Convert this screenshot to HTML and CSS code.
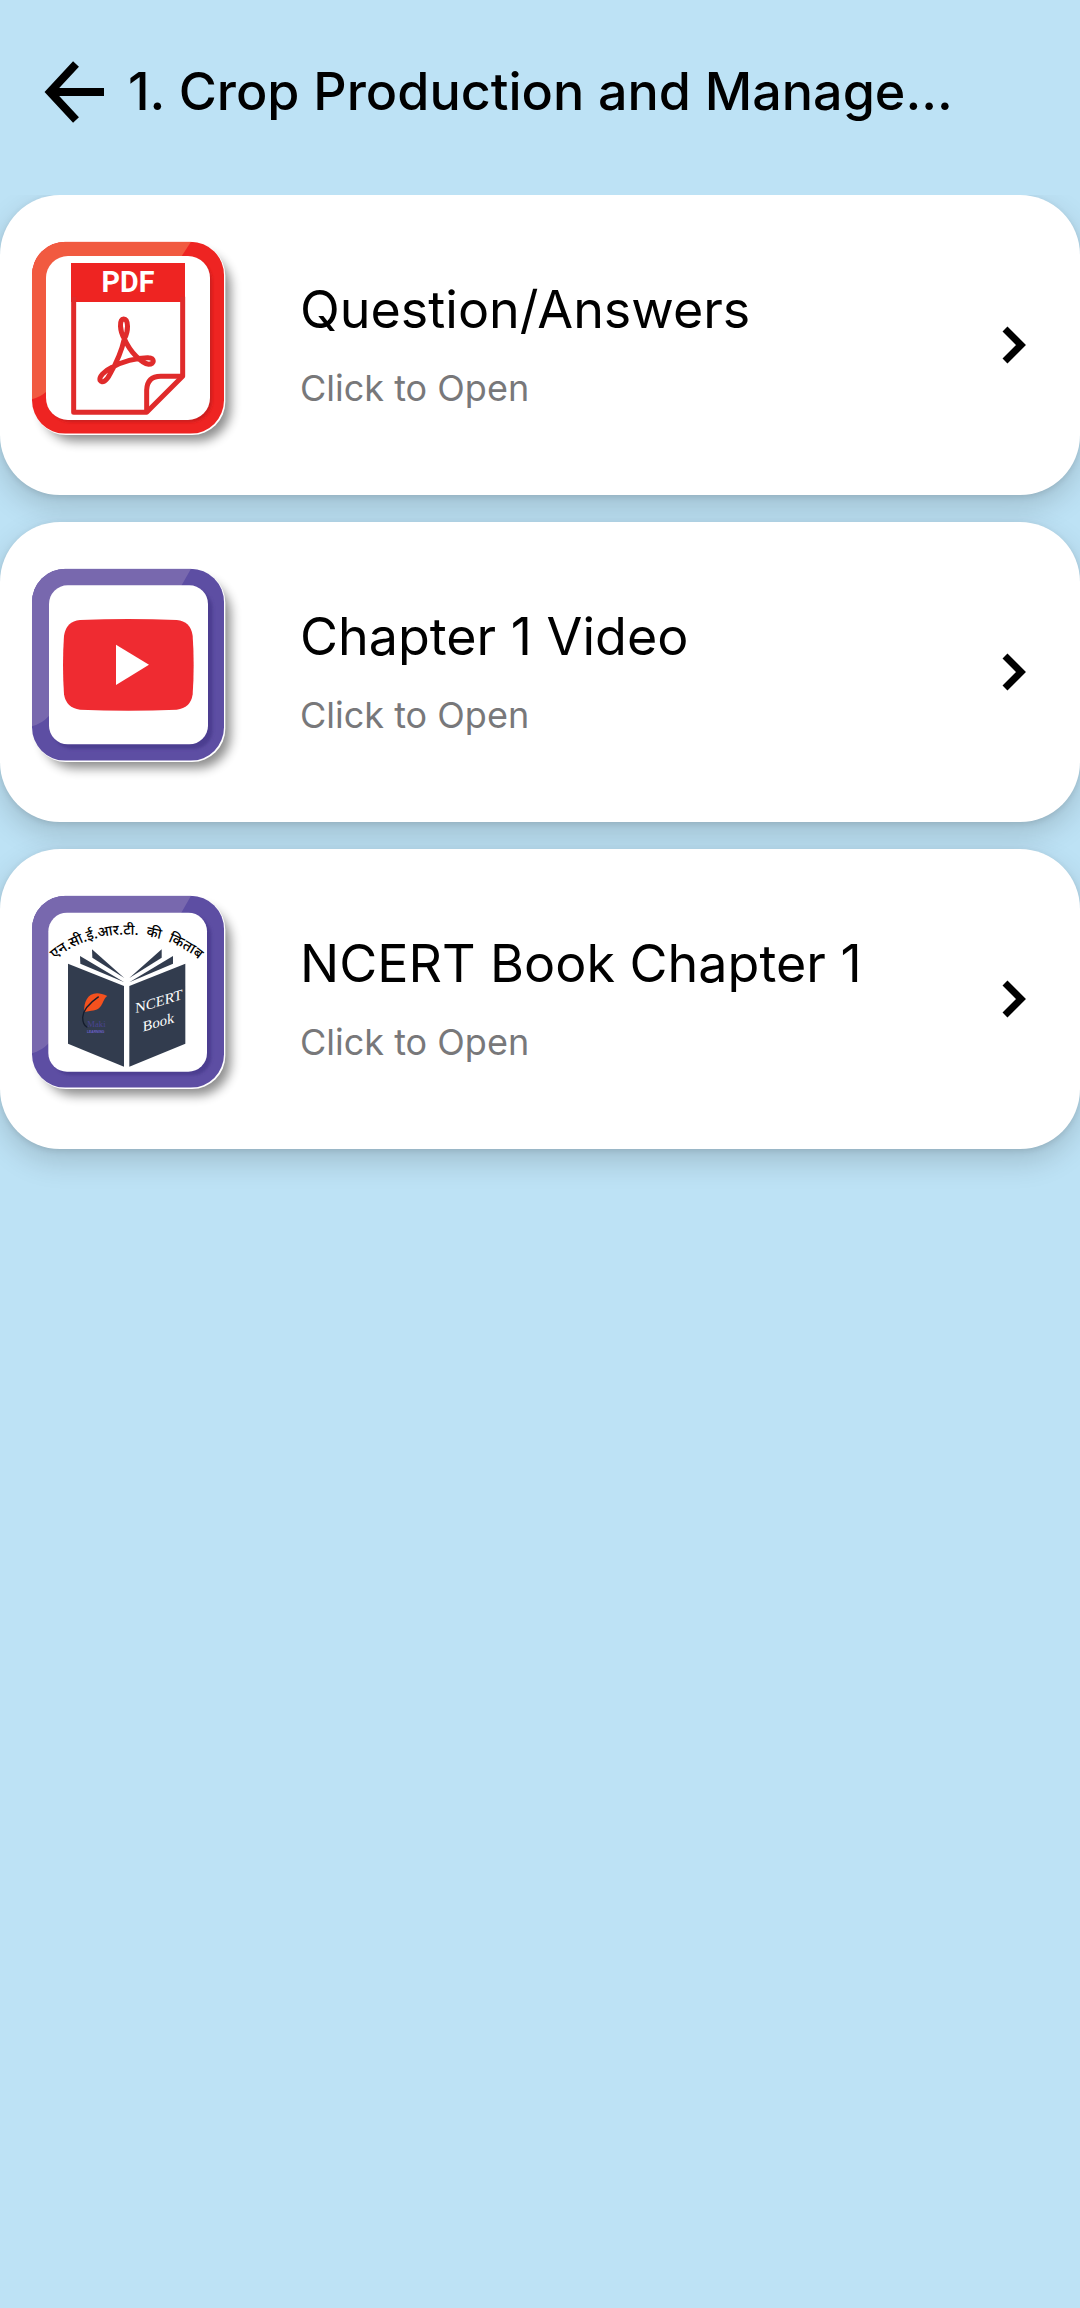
FILE: index.html
```html
<!DOCTYPE html>
<html lang="en">

<head>
    <meta charset="UTF-8">
    <meta name="viewport" content="width=device-width, initial-scale=1.0">
    <title>Crop Production and Management</title>
    <link rel="stylesheet" href="styles.css">
</head>

<body>
    <header class="topbar">
        <button class="back-btn" type="button" aria-label="Back">
            <svg class="back-icon" viewBox="0 0 60 62" aria-hidden="true">
                <path d="M60 31H8M32 3L6 31L32 59" />
            </svg>
        </button>
        <h1 class="topbar-title">1. Crop Production and Manage...</h1>
    </header>

    <main class="chapter-list">
        <!-- PDF -->
        <a class="card" href="#questions">
            <svg class="card-icon" viewBox="0 0 690 690" aria-hidden="true">
                <defs>
                    <filter id="blur" x="-20%" y="-20%" width="140%" height="140%">
                        <feGaussianBlur stdDeviation="16" />
                    </filter>
                    <filter id="softBlur" x="-20%" y="-20%" width="140%" height="140%">
                        <feGaussianBlur stdDeviation="4" />
                    </filter>
                    <clipPath id="tileClip">
                        <rect x="36" y="35" width="576" height="576" rx="100" />
                    </clipPath>
                </defs>
                <rect class="tile-shadow" x="66" y="70" width="566" height="564" rx="100" filter="url(#blur)" />
                <rect class="tile-edge" x="38" y="37" width="578" height="578" rx="100" />
                <g clip-path="url(#tileClip)">
                    <rect class="tile-red" x="36" y="35" width="576" height="576" />
                    <path class="tile-red-light" d="M36 35H513L484 80L78 486Q60 502 36 508Z" />
                </g>
                <rect class="tile-inner-red" x="88" y="88" width="488" height="488" rx="66" filter="url(#softBlur)" />
                <rect class="tile-face" x="78" y="78" width="492" height="492" rx="66" />
                <path class="pdf-head" d="M153 99H495V216H153Z" />
                <path class="pdf-line" d="M161 200V547H380L488 439V200" />
                <path class="pdf-line" d="M380 547V480Q382 439 422 439H488" />
                <path class="pdf-mark" d="M313 326C299 304 297 268 311 267C326 268 326 304 313 326C330 365 364 400 386 403C405 403 404 383 386 383C350 382 304 396 276 412C250 424 237 442 240 451C246 461 260 453 270 432C286 404 306 358 313 326Z" />
                <text class="pdf-text" x="324" y="185">PDF</text>
            </svg>
            <div class="card-text">
                <h2 class="card-title">Question/Answers</h2>
                <p class="card-sub">Click to Open</p>
            </div>
            <svg class="chevron" viewBox="0 0 24 38" aria-hidden="true">
                <path d="M3 3L19 19L3 35" />
            </svg>
        </a>

        <!-- Video -->
        <a class="card" href="#video">
            <svg class="card-icon" viewBox="0 0 690 690" aria-hidden="true">
                <rect class="tile-shadow" x="66" y="70" width="566" height="564" rx="100" filter="url(#blur)" />
                <rect class="tile-edge" x="38" y="37" width="578" height="578" rx="100" />
                <g clip-path="url(#tileClip)">
                    <rect class="tile-purple" x="36" y="35" width="576" height="576" />
                    <path class="tile-purple-light" d="M36 35H513L484 86L86 478Q66 500 36 508Z" />
                </g>
                <rect class="tile-inner-purple" x="100" y="98" width="478" height="478" rx="56" filter="url(#softBlur)" />
                <rect class="tile-face" x="87" y="85" width="477" height="477" rx="56" />
                <path class="video-box" d="M180 189Q325 183 470 189Q512 193 518 236Q524 323 518 412Q512 454 470 458Q325 464 180 458Q139 454 132 412Q126 323 132 236Q139 193 180 189Z" />
                <path class="video-play" d="M288 263L387 323L288 384Z" />
            </svg>
            <div class="card-text">
                <h2 class="card-title">Chapter 1 Video</h2>
                <p class="card-sub">Click to Open</p>
            </div>
            <svg class="chevron" viewBox="0 0 24 38" aria-hidden="true">
                <path d="M3 3L19 19L3 35" />
            </svg>
        </a>

        <!-- Book -->
        <a class="card" href="#book">
            <svg class="card-icon" viewBox="0 0 690 690" aria-hidden="true">
                <rect class="tile-shadow" x="66" y="70" width="566" height="564" rx="100" filter="url(#blur)" />
                <rect class="tile-edge" x="38" y="37" width="578" height="578" rx="100" />
                <g clip-path="url(#tileClip)">
                    <rect class="tile-purple" x="36" y="35" width="576" height="576" />
                    <path class="tile-purple-light" d="M36 35H513L484 86L86 478Q66 500 36 508Z" />
                </g>
                <rect class="tile-inner-purple" x="98" y="98" width="476" height="476" rx="56" filter="url(#softBlur)" />
                <rect class="tile-face" x="85" y="86" width="476" height="477" rx="56" />
                <path id="bookArc" fill="none" d="M98 232C210 128 420 122 542 232" />
                <text class="book-hindi"><textPath href="#bookArc" startOffset="50%">एन.सी.ई.आर.टी. &nbsp;की &nbsp;किताब</textPath></text>
                <!-- covers and pages -->
                <path class="book-cover" d="M144 239L312 306V548L144 479Z" />
                <path class="book-cover" d="M496 239L328 306V548L496 479Z" />
                <path class="book-cover" d="M180 216L313 295L181 239Z" />
                <path class="book-cover" d="M216 196L313 282L217 221Z" />
                <path class="book-cover" d="M459 216L328 295L459 239Z" />
                <path class="book-cover" d="M425 196L328 282L425 221Z" />
                <path class="feather" d="M193 384C190 345 212 312 262 336C244 348 252 378 214 380Z" />
                <path class="feather-stem" d="M236 338Q190 370 188 400Q188 424 202 430" />
                <text class="book-logo" x="202" y="430">Maki</text>
                <text class="book-logo-sub" x="201" y="446">LEARNING</text>
                <g transform="matrix(1 -0.3 0 1 346 388)">
                    <text class="book-text" x="0" y="0">NCERT</text>
                    <text class="book-text" x="22" y="62">Book</text>
                </g>
            </svg>
            <div class="card-text">
                <h2 class="card-title">NCERT Book Chapter 1</h2>
                <p class="card-sub">Click to Open</p>
            </div>
            <svg class="chevron" viewBox="0 0 24 38" aria-hidden="true">
                <path d="M3 3L19 19L3 35" />
            </svg>
        </a>
    </main>
</body>

</html>
```
FILE: styles.css
```css
body {
    margin: 0;
    min-height: 100vh;
    display: flex;
    flex-direction: column;
    background-color: #bde2f5;
    font-family: Inter, "Liberation Sans", sans-serif;
    color: black;
}

.topbar {
    display: flex;
    align-items: center;
    gap: 24px;
    padding: 56px 44px 67px;
}

.back-btn {
    padding: 0;
    border: none;
    background: none;
    cursor: pointer;
}

.back-icon {
    display: block;
    width: 60px;
    height: 62px;
    fill: none;
    stroke: black;
    stroke-width: 8px;
}

.topbar-title {
    margin: 0;
    font-size: 52px;
    font-weight: 500;
    line-height: 72px;
    white-space: nowrap;
}

.chapter-list {
    flex: 1;
    display: flex;
    flex-direction: column;
    gap: 27px;
    overflow: hidden;
}

.card {
    display: flex;
    align-items: center;
    padding: 35px 54px 35px 20px;
    border-radius: 60px;
    background-color: white;
    box-shadow: 0 12px 30px rgba(0, 0, 0, 0.16), 0 2px 6px rgba(0, 0, 0, 0.1);
    color: black;
    text-decoration: none;
}

.card-icon {
    flex: none;
    width: 230px;
    height: 230px;
}

.card-text {
    flex: 1;
    padding-left: 50px;
}

.card-title {
    margin: 0;
    font-size: 52px;
    font-weight: 400;
    line-height: 72px;
}

.card-sub {
    margin: 14px 0 0;
    font-size: 36px;
    line-height: 56px;
    color: #78787a;
}

.chevron {
    flex: none;
    width: 24px;
    height: 38px;
    fill: none;
    stroke: black;
    stroke-width: 7px;
}

/* Icon tiles */
.tile-shadow {
    fill: #000;
    opacity: 0.45;
}

.tile-edge,
.tile-face,
.video-play {
    fill: #fff;
}

.tile-red {
    fill: #ee2422;
}

.tile-red-light {
    fill: #f15a40;
}

.tile-inner-red {
    fill: #c91d1f;
}

.tile-purple {
    fill: #5d4ea3;
}

.tile-purple-light {
    fill: #7868ae;
}

.tile-inner-purple {
    fill: #4b3d90;
}

.pdf-head {
    fill: #ee2422;
}

.pdf-line,
.pdf-mark {
    fill: none;
    stroke: #e02b2b;
    stroke-width: 15px;
    stroke-linejoin: round;
}

.pdf-text {
    fill: #fff;
    font-family: Roboto, sans-serif;
    font-size: 86px;
    font-weight: 700;
    text-anchor: middle;
}

.video-box {
    fill: #ef2b31;
}

.book-hindi {
    font-family: "Noto Sans", "Noto Sans Devanagari", sans-serif;
    font-size: 43px;
    font-weight: 500;
    text-anchor: middle;
}

.book-cover {
    fill: #323c4e;
}

.book-text {
    fill: #fff;
    font-family: "Liberation Serif", serif;
    font-size: 44px;
}

.feather {
    fill: #f4511e;
}

.feather-stem {
    fill: none;
    stroke: #141c2c;
    stroke-width: 4px;
}

.book-logo {
    fill: #4a4490;
    font-family: "Liberation Serif", serif;
    font-size: 26px;
}

.book-logo-sub {
    fill: #6a60c8;
    font-family: "Liberation Sans", sans-serif;
    font-size: 10px;
    font-weight: 700;
}
```
